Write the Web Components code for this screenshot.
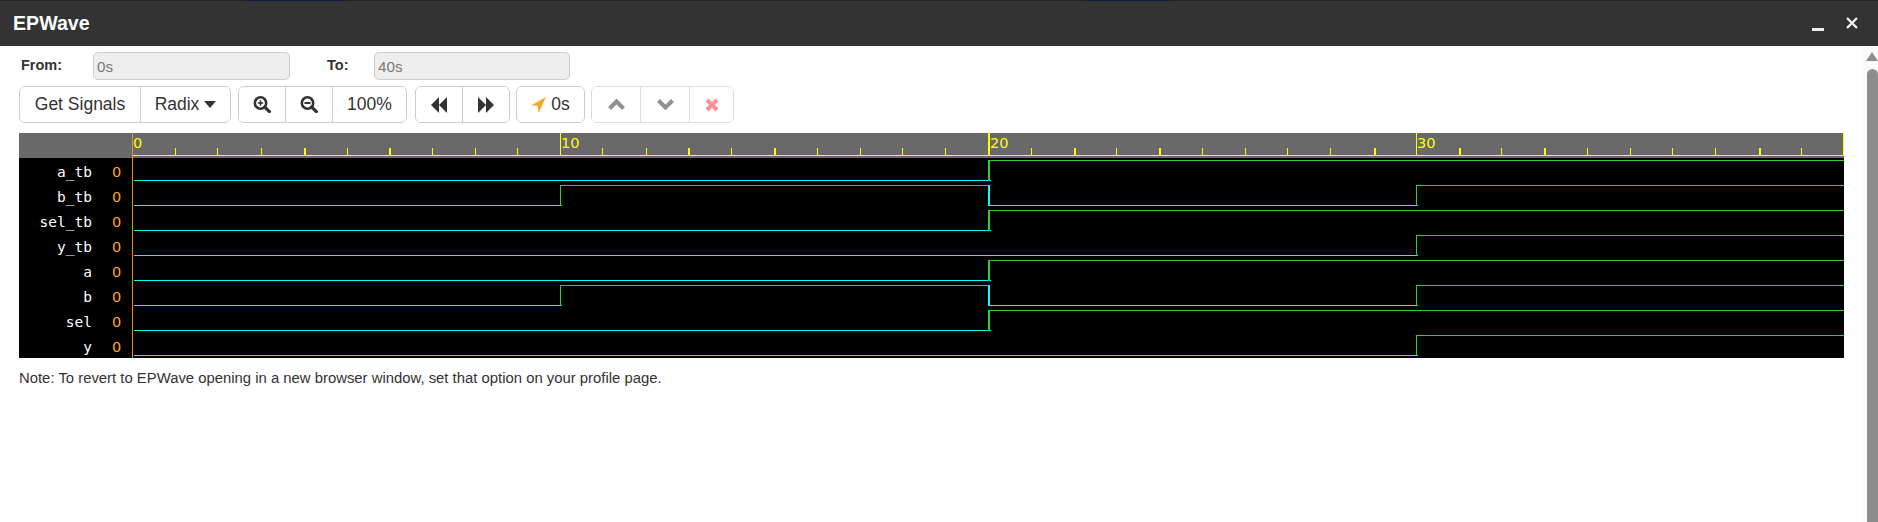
<!DOCTYPE html>
<html lang="en">
<head>
<meta charset="utf-8">
<title>EPWave</title>
<style>
  html, body { margin: 0; height: 100%; overflow: hidden; background: #fff; }
</style>
</head>
<body>
<ep-app>
  <ep-titlebar slot="top">EPWave</ep-titlebar>
  <ep-range-row>
    <ep-field label="From:" value="0s" style="--label:72px;--input:197px;margin-left:2px"></ep-field>
    <ep-field label="To:" value="40s" style="--label:47px;--input:196px;margin-left:37px"></ep-field>
  </ep-range-row>
  <ep-toolbar>
    <ep-btn-group>
      <ep-btn style="width:120px">Get Signals</ep-btn>
      <ep-btn style="width:90px">Radix <ep-icon name="caret"></ep-icon></ep-btn>
    </ep-btn-group>
    <ep-btn-group style="margin-left:1px">
      <ep-btn style="width:46px"><ep-icon name="zoomin"></ep-icon></ep-btn>
      <ep-btn style="width:47px"><ep-icon name="zoomout"></ep-icon></ep-btn>
      <ep-btn style="width:74px">100%</ep-btn>
    </ep-btn-group>
    <ep-btn-group style="margin-left:2px">
      <ep-btn style="width:46px"><ep-icon name="backward"></ep-icon></ep-btn>
      <ep-btn style="width:47px"><ep-icon name="forward"></ep-icon></ep-btn>
    </ep-btn-group>
    <ep-btn-group>
      <ep-btn style="width:67px"><ep-icon name="arrow"></ep-icon>0s</ep-btn>
    </ep-btn-group>
    <ep-btn-group disabled>
      <ep-btn style="width:48px"><ep-icon name="up"></ep-icon></ep-btn>
      <ep-btn style="width:49px"><ep-icon name="down"></ep-icon></ep-btn>
      <ep-btn style="width:44px"><ep-icon name="close"></ep-icon></ep-btn>
    </ep-btn-group>
  </ep-toolbar>
  <ep-wave></ep-wave>
  <ep-note>Note: To revert to EPWave opening in a new browser window, set that option on your profile page.</ep-note>
</ep-app>

<script>
'use strict';

const SANS = '"Liberation Sans", Arial, sans-serif';

const icons = {
  caret: '<svg width="12" height="7" viewBox="0 0 12 7"><path d="M0 0h12L6 7z" fill="#333"/></svg>',
  zoomin: `<svg width="18" height="17" viewBox="0 0 18 17" fill="none" stroke="#333">
      <circle cx="7.5" cy="7" r="5.7" stroke-width="2.6"/>
      <path d="M11.8 11.2l4.6 4.4" stroke-width="3.2" stroke-linecap="round"/>
      <path d="M4.8 7h5.4M7.5 4.3v5.4" stroke-width="1.6"/></svg>`,
  zoomout: `<svg width="18" height="17" viewBox="0 0 18 17" fill="none" stroke="#333">
      <circle cx="7.5" cy="7" r="5.7" stroke-width="2.6"/>
      <path d="M11.8 11.2l4.6 4.4" stroke-width="3.2" stroke-linecap="round"/>
      <path d="M4.5 7h6" stroke-width="2"/></svg>`,
  backward: '<svg width="16" height="16" viewBox="0 0 16 16"><path d="M0 8l8-8v16zM8 8l8-8v16z" fill="#333"/></svg>',
  forward: '<svg width="16" height="16" viewBox="0 0 16 16"><path d="M16 8L8 0v16zM8 8L0 0v16z" fill="#333"/></svg>',
  arrow: '<svg width="15" height="16" viewBox="0 0 15 16"><path d="M15 0L0 8.500h6.500L7.500 16z" fill="#f7a823"/></svg>',
  up: '<svg width="17" height="11" viewBox="0 0 17 11"><path d="M1.500 9.500l7-7 7 7" fill="none" stroke="#555" stroke-width="4"/></svg>',
  down: '<svg width="17" height="11" viewBox="0 0 17 11"><path d="M1.500 1.500l7 7 7-7" fill="none" stroke="#555" stroke-width="4"/></svg>',
  close: '<svg width="14" height="14" viewBox="0 0 14 14"><path d="M2 2l10 10M12 2L2 12" fill="none" stroke="#f55" stroke-width="4"/></svg>',
};

class EpIcon extends HTMLElement {
  constructor() {
    super();
    this.attachShadow({ mode: 'open' });
    this.shadowRoot.innerHTML = `
      <style>
        :host { display: inline-flex; }
        svg { display: block; }
      </style>
      ${icons[this.getAttribute('name')] || ''}
    `;
  }
}

class EpApp extends HTMLElement {
  constructor() {
    super();
    this.attachShadow({ mode: 'open' });
    this.shadowRoot.innerHTML = `
      <style>
        :host { display: flex; flex-direction: column; height: 522px; font-family: ${SANS}; color: #333; }
        .body { display: flex; flex: 1; min-height: 0; }
        .page { flex: 1; min-width: 0; padding: 6px 0 0 19px; display: flex; flex-direction: column; align-items: flex-start; }
      </style>
      <slot name="top"></slot>
      <div class="body">
        <div class="page"><slot></slot></div>
        <ep-scrollbar></ep-scrollbar>
      </div>
    `;
  }
}

class EpTitlebar extends HTMLElement {
  constructor() {
    super();
    this.attachShadow({ mode: 'open' });
    this.shadowRoot.innerHTML = `
      <style>
        :host { display: block; height: 46px; background: #333; color: #fff; }
        .edge { height: 1px; background: linear-gradient(90deg, #222 245px, #0d1a40 245px, #0d1a40 345px, #222 345px, #222 1085px, #0d1a40 1085px, #0d1a40 1170px, #222 1170px); }
        .bar { height: 45px; box-sizing: border-box; padding: 0 20px 0 13px; display: flex; align-items: center; }
        .name { flex: 1; font: bold 19.6px ${SANS}; }
        svg { display: block; }
        .min { margin: 12px 22px 0 0; }
        .x { margin-top: -1px; }
      </style>
      <div class="edge"></div>
      <div class="bar">
        <div class="name"><slot></slot></div>
        <svg class="min" width="12" height="3"><rect width="12" height="3" fill="#eee"/></svg>
        <svg class="x" width="12" height="12" viewBox="0 0 12 12"><path d="M1 1l10 10M11 1L1 11" stroke="#eee" stroke-width="2.4"/></svg>
      </div>
    `;
  }
}

class EpRangeRow extends HTMLElement {
  constructor() {
    super();
    this.attachShadow({ mode: 'open' });
    this.shadowRoot.innerHTML = `
      <style>:host { display: flex; height: 28px; }</style>
      <slot></slot>
    `;
  }
}

class EpField extends HTMLElement {
  constructor() {
    super();
    this.attachShadow({ mode: 'open' });
    this.shadowRoot.innerHTML = `
      <style>
        :host { display: flex; align-items: center; }
        label { width: var(--label); font: bold 14.5px ${SANS}; color: #333; padding-bottom: 2px; }
        .input {
          box-sizing: border-box; width: var(--input); height: 28px; padding: 1px 0 0 3px;
          background: #eee; border: 1px solid #ccc; border-radius: 5px;
          font: 15.2px/25px ${SANS}; color: #777;
        }
      </style>
      <label>${this.getAttribute('label')}</label>
      <div class="input">${this.getAttribute('value')}</div>
    `;
  }
}

class EpToolbar extends HTMLElement {
  constructor() {
    super();
    this.attachShadow({ mode: 'open' });
    this.shadowRoot.innerHTML = `
      <style>:host { display: flex; gap: 6px; margin-top: 6px; }</style>
      <slot></slot>
    `;
  }
}

class EpBtnGroup extends HTMLElement {
  constructor() {
    super();
    this.attachShadow({ mode: 'open' });
    this.shadowRoot.innerHTML = `
      <style>
        :host { display: flex; height: 37px; box-sizing: border-box; border: 1px solid #ccc; border-radius: 6px; overflow: hidden; }
        :host([disabled]) { opacity: .65; }
      </style>
      <slot></slot>
    `;
  }
}

class EpBtn extends HTMLElement {
  constructor() {
    super();
    this.attachShadow({ mode: 'open' });
    this.shadowRoot.innerHTML = `
      <style>
        :host {
          display: flex; align-items: center; justify-content: center; gap: 5px; box-sizing: border-box;
          background: #fff; font: 17.5px ${SANS}; color: #333; white-space: nowrap;
        }
        :host(:not(:first-child)) { border-left: 1px solid #ccc; }
      </style>
      <slot></slot>
    `;
  }
}

// signals: [name, times where it toggles], every one starts low
const signals = [
  ['a_tb', [20]],
  ['b_tb', [10, 20, 30]],
  ['sel_tb', [20]],
  ['y_tb', [30]],
  ['a', [20]],
  ['b', [10, 20, 30]],
  ['sel', [20]],
  ['y', [30]],
];

// pixel column of each tick, read off the ruler (thick ones are 2px wide)
const ticks = [
  132, 175, 217, 261, 304, 347, 389, 432, 475, 517,
  560, 602, 646, 688, 731, 774, 817, 860, 902, 945,
  988, 1031, 1074, 1116, 1159, 1202, 1245, 1287, 1330, 1374,
  1416, 1459, 1501, 1544, 1587, 1630, 1672, 1715, 1759, 1801,
  1843,
];
const thick = [4, 6, 13, 15, 20, 22, 24, 29, 31, 33, 38];
const CYAN = '#00ffff';
const GREEN = '#32cd32';
const YELLOW = '#ffff00';

const rect = (x, y, w, h, fill) => `<rect x="${x}" y="${y}" width="${w}" height="${h}" fill="${fill}"/>`;

function ruler() {
  let out = rect(132, 155, 1712, 1, YELLOW);
  ticks.forEach((x, i) => {
    if (i === 0) return;
    const major = i % 10 === 0;
    const w = thick.includes(i) ? 2 : 1;
    out += major ? rect(x, 133, w, 23, YELLOW) : rect(x, 148, w, 7, YELLOW);
    if (major && i < 40) {
      out += `<text x="${x + w}" y="148">${i}</text>`;
    }
  });
  out += '<text x="133" y="148">0</text>';
  return out;
}

function trace(toggles, row) {
  const low = 180 + row * 25;
  const high = 160 + row * 25;
  let out = '';
  let start = 134;
  let level = 0;
  toggles.concat([40]).forEach((t) => {
    const x = ticks[t];
    const w = t === 20 ? 2 : 1;
    if (level === 0) {
      out += rect(start, low, x + w + 1 - start, 1, CYAN);
    } else {
      out += rect(start, high, x + w - start + (t === 40 ? 1 : 0), 1, GREEN);
    }
    if (t < 40) {
      out += rect(x, high, w, 21, level === 0 ? GREEN : CYAN);
      start = level === 0 ? x : x + w;
      level = 1 - level;
    }
  });
  return out;
}

class EpWave extends HTMLElement {
  constructor() {
    super();
    this.attachShadow({ mode: 'open' });
    this.shadowRoot.innerHTML = `
      <style>
        :host { display: flex; width: 1825px; height: 225px; margin-top: 10px; background: #000; }
        .names { width: 113px; flex: none; }
        .head { height: 25px; background: #696969; }
        .row { display: flex; height: 25px; box-sizing: border-box; padding-top: 3px; }
        .name { width: 73px; text-align: right; color: #fff; font: 14.5px/22px "DejaVu Sans Mono", monospace; }
        .val { margin-left: 20px; color: #ffa52a; font: 14.5px/22px "DejaVu Sans", sans-serif; }
        svg { display: block; flex: none; }
        text { font: 14.5px "DejaVu Sans", sans-serif; fill: #ffff00; }
      </style>
      <div class="names">
        <div class="head"></div>
        ${signals
          .map(([name]) => {
            return `<div class="row"><span class="name">${name}</span><span class="val">0</span></div>`;
          })
          .join('')}
      </div>
      <svg width="1712" height="225" viewBox="132 133 1712 225" shape-rendering="crispEdges">
        ${rect(132, 133, 1712, 25, '#696969')}
        ${ruler()}
        ${signals.map(([, toggles], i) => trace(toggles, i)).join('')}
        ${rect(132, 133, 1, 225, '#e0961e')}
      </svg>
    `;
  }
}

class EpNote extends HTMLElement {
  constructor() {
    super();
    this.attachShadow({ mode: 'open' });
    this.shadowRoot.innerHTML = `
      <style>:host { display: block; margin-top: 11px; font: 14.86px/18px ${SANS}; color: #333; }</style>
      <slot></slot>
    `;
  }
}

class EpScrollbar extends HTMLElement {
  constructor() {
    super();
    this.attachShadow({ mode: 'open' });
    this.shadowRoot.innerHTML = `
      <style>
        :host { display: block; width: 15px; background: #fafafa; padding: 6px 0 0 3px; box-sizing: border-box; overflow: hidden; }
        svg { display: block; }
        .thumb { width: 11px; height: 600px; margin: 8px 0 0 1px; background: #8d8d8d; border-radius: 6px 6px 0 0; }
      </style>
      <svg width="12" height="9" viewBox="0 0 12 9"><path d="M6 0l6 9H0z" fill="#8d8d8d"/></svg>
      <div class="thumb"></div>
    `;
  }
}

customElements.define('ep-icon', EpIcon);
customElements.define('ep-app', EpApp);
customElements.define('ep-titlebar', EpTitlebar);
customElements.define('ep-range-row', EpRangeRow);
customElements.define('ep-field', EpField);
customElements.define('ep-toolbar', EpToolbar);
customElements.define('ep-btn-group', EpBtnGroup);
customElements.define('ep-btn', EpBtn);
customElements.define('ep-wave', EpWave);
customElements.define('ep-note', EpNote);
customElements.define('ep-scrollbar', EpScrollbar);
</script>
</body>
</html>
